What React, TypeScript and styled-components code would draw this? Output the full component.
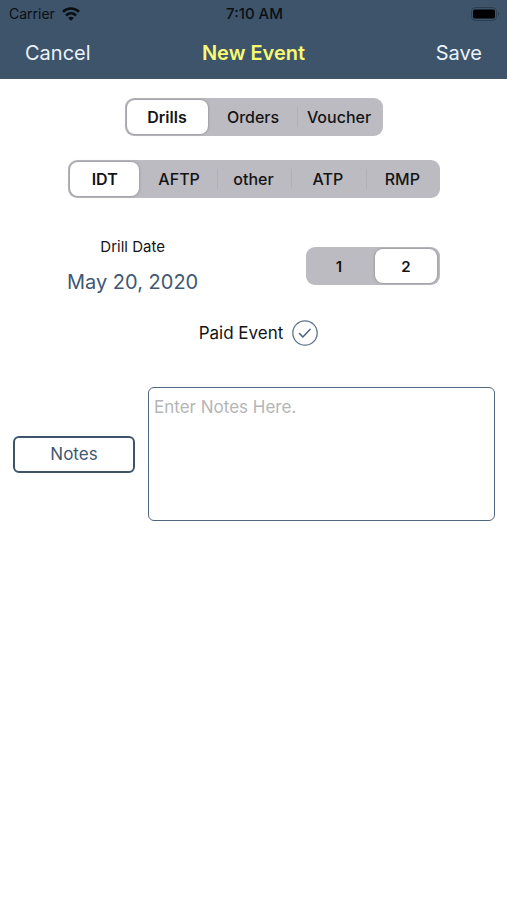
import React, { useState } from "react";
import styled, { createGlobalStyle } from "styled-components";

const slate = "#3d546b";

const GlobalStyle = createGlobalStyle`
  * { box-sizing: border-box; }
  body { margin: 0; background: #fff; color: #141416; font-family: Inter, "Liberation Sans", sans-serif; }
  button, input, textarea { font: inherit; }
`;

const Header = styled.header`
  background: ${slate};
  padding-bottom: 1px;
`;

const StatusBar = styled.div`
  display: grid;
  grid-template-columns: 1fr auto 1fr;
  align-items: center;
  height: 27px;
  padding: 0 7px 0 9px;
  font-size: 14px;
  color: #0b0f14;
`;

const Carrier = styled.span`
  display: flex;
  align-items: center;
  gap: 7px;
`;

const Clock = styled.time`
  font-size: 15px;
  font-weight: 500;
`;

const BatteryIcon = styled.svg`
  justify-self: end;
`;

const NavBar = styled.nav`
  display: grid;
  grid-template-columns: 1fr auto 1fr;
  align-items: center;
  height: 51px;
  padding: 0 25px;
`;

const NavButton = styled.button<{ $end?: boolean }>`
  justify-self: ${(p) => (p.$end ? "end" : "start")};
  padding: 0;
  border: 0;
  background: none;
  color: #eaf2fa;
  font-size: 20px;
  line-height: 28px;
  cursor: pointer;
`;

const Title = styled.h1`
  margin: 0;
  color: #f7fa72;
  font-size: 20px;
  line-height: 28px;
  font-weight: 600;
`;

const Form = styled.form`
  display: flex;
  flex-direction: column;
  align-items: center;
  padding-top: 19px;
`;

const Group = styled.fieldset<{ $width: string }>`
  display: flex;
  width: ${(p) => p.$width};
  height: 38px;
  min-width: 0;
  margin: 0;
  padding: 0;
  border: 0;
  border-radius: 9px;
  background: #bcbbc1;
`;

const Segment = styled.label<{ $divided: boolean }>`
  position: relative;
  display: flex;
  flex: 1 1 0;
  align-items: center;
  padding: 2px 3px 2px 2px;
  cursor: pointer;

  &::before {
    content: "";
    position: absolute;
    left: 0;
    top: 9px;
    bottom: 9px;
    width: 1px;
    background: ${(p) => (p.$divided ? "#b0b0b7" : "transparent")};
  }
`;

const SegmentInput = styled.input`
  position: absolute;
  inset: 0;
  width: 100%;
  height: 100%;
  margin: 0;
  opacity: 0;
  cursor: pointer;
`;

const SegmentText = styled.span<{ $bold: boolean }>`
  display: flex;
  flex: 1;
  align-items: center;
  justify-content: center;
  height: 34px;
  border-radius: 8px;
  font-size: ${(p) => (p.$bold ? "15px" : "16px")};
  font-weight: ${(p) => (p.$bold ? 600 : 500)};

  ${SegmentInput}:checked + & {
    background: #fff;
    font-weight: 600;
    box-shadow: 0 0 2px 1px rgba(90, 90, 96, 0.3);
  }
`;

const Types = styled.div`
  display: flex;
  justify-content: center;
  width: 100%;
  padding: 24px 67px 39px 68px;
`;

const DateRow = styled.div`
  display: flex;
  align-items: center;
  justify-content: space-between;
  width: 100%;
  padding: 0 67px;
`;

const DateField = styled.div`
  display: flex;
  flex-direction: column;
  align-items: center;
  gap: 12px;
`;

const DateLabel = styled.span`
  font-size: 15px;
  line-height: 20px;
`;

const DateButton = styled.button`
  padding: 0;
  border: 0;
  background: none;
  color: #405873;
  font-size: 20px;
  line-height: 26px;
  cursor: pointer;
`;

const PaidLabel = styled.label`
  display: flex;
  align-items: center;
  gap: 9px;
  margin: 25px 0 41px;
  padding-left: 10px;
  font-size: 17px;
  line-height: 26px;
  cursor: pointer;
`;

const CheckHolder = styled.span`
  position: relative;
  display: flex;
`;

const NotesRow = styled.div`
  display: grid;
  grid-template-columns: 122px 1fr;
  align-items: center;
  gap: 13px;
  width: 100%;
  padding: 0 12px 0 13px;
`;

const NotesButton = styled.button`
  height: 37px;
  padding: 0;
  border: 2px solid ${slate};
  border-radius: 6px;
  background: #fff;
  color: #405873;
  font-size: 17px;
  cursor: pointer;
`;

const NotesInput = styled.textarea`
  display: block;
  width: 100%;
  height: 134px;
  padding: 8px 5px;
  border: 1px solid #50677f;
  border-radius: 6px;
  background: #fff;
  color: #141416;
  font-size: 17px;
  line-height: 22px;
  resize: none;

  &::placeholder { color: #b5b5b6; opacity: 1; }
`;

type SegmentedProps = {
  name: string;
  label: string;
  options: string[];
  initial: string;
  width: string;
  bold?: boolean;
};

function Segmented({ name, label, options, initial, width, bold = false }: SegmentedProps) {
  const [value, setValue] = useState(initial);
  const selected = options.indexOf(value);
  return (
    <Group $width={width} aria-label={label}>
      {options.map((option, i) => (
        <Segment key={option} $divided={i > 0 && i !== selected && i !== selected + 1}>
          <SegmentInput
            type="radio"
            name={name}
            value={option}
            checked={option === value}
            onChange={() => setValue(option)}
          />
          <SegmentText $bold={bold}>{option}</SegmentText>
        </Segment>
      ))}
    </Group>
  );
}

export default function App() {
  const [paid, setPaid] = useState(true);
  return (
    <>
      <GlobalStyle />
      <Header>
        <StatusBar>
          <Carrier>
            Carrier
            <svg width="18" height="14" viewBox="0 0 18 14" fill="none" stroke="currentColor" strokeWidth="2.7" aria-hidden="true">
              <path d="M1 4.8C5.5 .4 12.5 .4 17 4.8" />
              <path d="M4 8.4c2.9-2.7 7.1-2.7 10 0" />
              <path d="M6.1 10.9c1.7-1.6 4.1-1.6 5.8 0L9 13.8z" fill="currentColor" stroke="none" />
            </svg>
          </Carrier>
          <Clock>7:10 AM</Clock>
          <BatteryIcon width="29" height="14" viewBox="0 0 29 14" aria-hidden="true">
            <rect x=".5" y=".5" width="25" height="13" rx="4" fill="none" stroke="#2c3e50" />
            <rect x="2" y="2.5" width="22" height="9" rx="2" fill="#000" />
            <path d="M27 5v4c1.5-.5 1.5-3.5 0-4z" fill="#2c3e50" />
          </BatteryIcon>
        </StatusBar>
        <NavBar>
          <NavButton type="button">Cancel</NavButton>
          <Title>New Event</Title>
          <NavButton type="button" $end>Save</NavButton>
        </NavBar>
      </Header>
      <Form onSubmit={(e) => e.preventDefault()}>
        <Segmented name="kind" label="Event kind" options={["Drills", "Orders", "Voucher"]} initial="Drills" width="258px" />
        <Types>
          <Segmented name="type" label="Event type" options={["IDT", "AFTP", "other", "ATP", "RMP"]} initial="IDT" width="100%" />
        </Types>
        <DateRow>
          <DateField>
            <DateLabel id="drill-date">Drill Date</DateLabel>
            <DateButton type="button" aria-describedby="drill-date">May 20, 2020</DateButton>
          </DateField>
          <Segmented name="count" label="Number of drills" options={["1", "2"]} initial="2" width="134px" bold />
        </DateRow>
        <PaidLabel>
          Paid Event
          <CheckHolder>
            <SegmentInput type="checkbox" checked={paid} onChange={(e) => setPaid(e.target.checked)} />
            <svg width="26" height="26" viewBox="0 0 26 26" fill="none" strokeLinecap="round" strokeLinejoin="round" aria-hidden="true">
              <circle cx="13" cy="13" r="12.2" stroke="#60748a" strokeWidth="1.3" />
              {paid && <path d="M7.6 13.6l3.2 3.4 7.2-7.6" stroke="#4b6280" strokeWidth="1.5" />}
            </svg>
          </CheckHolder>
        </PaidLabel>
        <NotesRow>
          <NotesButton type="button">Notes</NotesButton>
          <NotesInput aria-label="Notes" placeholder="Enter Notes Here." />
        </NotesRow>
      </Form>
    </>
  );
}
